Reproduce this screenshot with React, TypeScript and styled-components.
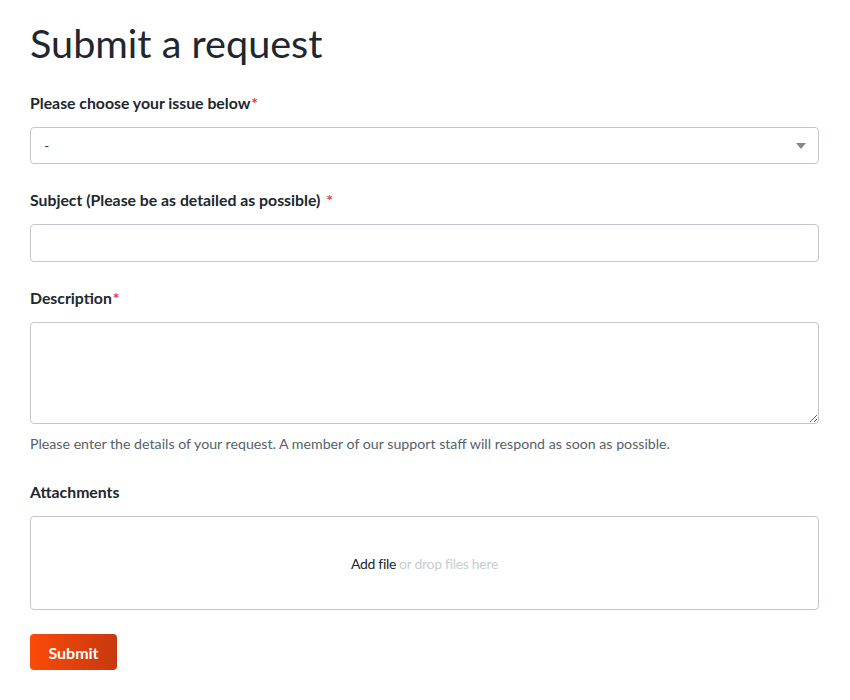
import styled, { createGlobalStyle } from "styled-components";

const GlobalStyle = createGlobalStyle`
  body {
    margin: 0;
    background: #fff;
    font-family: Lato, "Open Sans", sans-serif;
    color: #2f3941;
  }
`;

const Page = styled.div`
  padding: 19px 31px 30px 30px;
`;

const Title = styled.h1`
  margin: 0 0 26px;
  font-size: 39.6px;
  font-weight: 400;
  line-height: 48px;
  color: #20272e;
`;

const Field = styled.div<{ $gap?: number }>`
  display: flex;
  flex-direction: column;
  margin-bottom: ${(p) => p.$gap ?? 26}px;
`;

const Label = styled.label`
  font-size: 15.8px;
  font-weight: 700;
  line-height: 20px;
  color: #20272e;
  margin-bottom: 14px;
`;

const Required = styled.span<{ $spaced?: boolean }>`
  color: #e3393f;
  margin-left: ${(p) => (p.$spaced ? "6px" : "1px")};
`;

const SelectBox = styled.div`
  height: 37px;
  box-sizing: border-box;
  border: 1px solid #c2c8cc;
  border-radius: 4px;
  display: flex;
  align-items: center;
  justify-content: space-between;
  padding: 0 12px 0 13px;
  font-size: 14px;
  color: #2f3941;
`;

const Caret = styled.span`
  width: 0;
  height: 0;
  border-left: 5px solid transparent;
  border-right: 5px solid transparent;
  border-top: 6px solid #888;
`;

const Input = styled.input`
  height: 38px;
  box-sizing: border-box;
  border: 1px solid #c2c8cc;
  border-radius: 4px;
  font-family: inherit;
  font-size: 14px;
  outline: none;
`;

const TextArea = styled.textarea`
  height: 102px;
  box-sizing: border-box;
  border: 1px solid #c2c8cc;
  border-radius: 4px;
  font-family: inherit;
  font-size: 14px;
  outline: none;
  resize: vertical;
  display: block;
`;

const Hint = styled.p`
  margin: 10px 0 0;
  font-size: 14.2px;
  line-height: 20px;
  color: #555f6b;
`;

const DropZone = styled.div`
  height: 94px;
  box-sizing: border-box;
  border: 1px solid #c2c8cc;
  border-radius: 4px;
  display: flex;
  align-items: center;
  justify-content: center;
  font-size: 14px;
  letter-spacing: -0.3px;
`;

const AddFile = styled.span`
  color: #20272e;
`;

const DropText = styled.span`
  color: #c8cdd1;
  margin-left: 3px;
`;

const SubmitButton = styled.button`
  width: 87px;
  height: 36px;
  border: none;
  border-radius: 4px;
  background: linear-gradient(90deg, #fa4a08 0%, #c8380f 100%);
  color: #fff;
  font-family: inherit;
  font-size: 16px;
  font-weight: 700;
  cursor: pointer;
`;

export default function App() {
  return (
    <>
      <GlobalStyle />
      <Page>
        <Title>Submit a request</Title>
        <Field>
          <Label>
            Please choose your issue below<Required>*</Required>
          </Label>
          <SelectBox>
            <span>-</span>
            <Caret />
          </SelectBox>
        </Field>
        <Field>
          <Label>
            Subject (Please be as detailed as possible)<Required $spaced>*</Required>
          </Label>
          <Input />
        </Field>
        <Field $gap={28}>
          <Label>
            Description<Required>*</Required>
          </Label>
          <TextArea />
          <Hint>
            Please enter the details of your request. A member of our support staff will respond as soon as possible.
          </Hint>
        </Field>
        <Field $gap={24}>
          <Label>Attachments</Label>
          <DropZone>
            <AddFile>Add file</AddFile>
            <DropText>or drop files here</DropText>
          </DropZone>
        </Field>
        <SubmitButton>Submit</SubmitButton>
      </Page>
    </>
  );
}
